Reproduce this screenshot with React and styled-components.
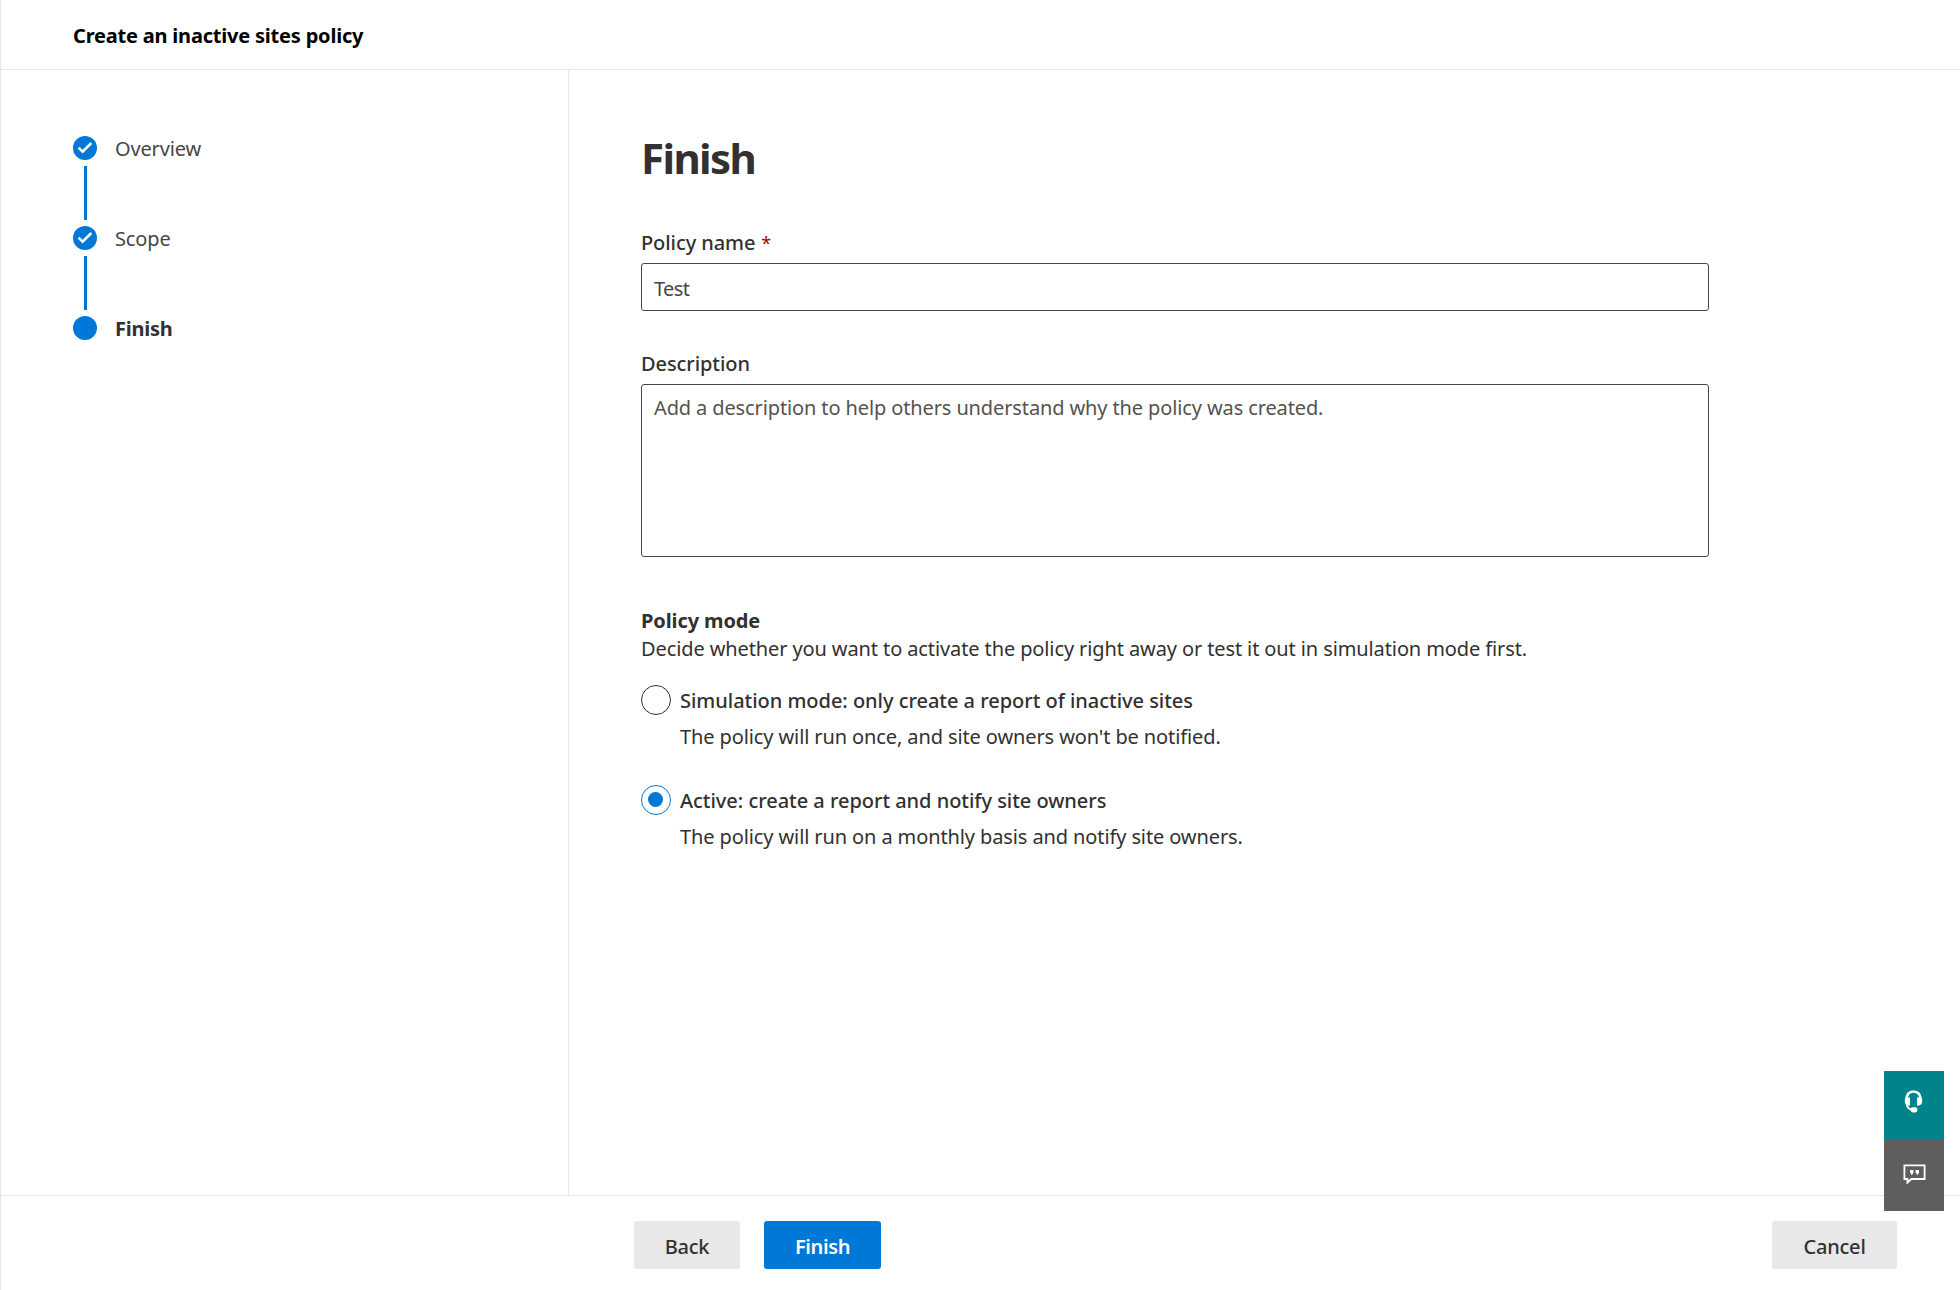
import React, { useState } from 'react';
import styled, { createGlobalStyle } from 'styled-components';

const GlobalStyle = createGlobalStyle`
  * { box-sizing: border-box; }
  body {
    margin: 0;
    background: #fff;
    color: #323130;
    font: 400 20px/28px "Noto Sans", "Open Sans", sans-serif;
    letter-spacing: -0.11px;
  }
`;

const Page = styled.div`
  display: flex;
  flex-direction: column;
  height: 100vh;
  border-left: 1px solid #e6e6e6;
`;

const Header = styled.header`
  display: flex;
  align-items: center;
  height: 70px;
  padding: 2px 72px 0;
  border-bottom: 1px solid #e6e6e6;
  color: #000;
`;

const Title = styled.span`
  font-weight: 700;
  letter-spacing: -0.2px;
`;

const Body = styled.div`
  display: flex;
  flex: 1;
`;

const Sidebar = styled.nav`
  width: 568px;
  padding: 66px 72px;
  border-right: 1px solid #e6e6e6;
`;

const Step = styled.div`
  display: flex;
  align-items: center;
  gap: 18px;
  height: 24px;
  color: ${(p) => (p.$current ? '#323130' : '#484644')};
  font-weight: ${(p) => (p.$current ? 700 : 400)};
  letter-spacing: ${(p) => (p.$current ? '-0.25px' : '-0.15px')};
`;

const StepName = styled.span`
  padding-top: 2px;
`;

const StepDot = styled.span`
  display: flex;
  width: 24px;
  height: 24px;
  border-radius: 50%;
  background: #0078d7;
`;

const StepLine = styled.div`
  width: 3px;
  height: 54px;
  margin: 6px 0 6px 11px;
  background: #0078d7;
`;

const Main = styled.main`
  flex: 1;
  padding: 60px 72px 0;
`;

const Heading = styled.h1`
  margin: 0 0 43px;
  font-size: 42px;
  line-height: 56px;
  font-weight: 700;
  letter-spacing: -1.6px;
`;

const Field = styled.div`
  display: flex;
  flex-direction: column;
  gap: 6px;
  width: 1068px;
  margin-bottom: ${(p) => p.$gap}px;
`;

const Label = styled.label`
  font-weight: 500;
  letter-spacing: -0.08px;
`;

const Required = styled.span`
  margin-left: 6px;
  color: #a80000;
  font-size: 18px;
  font-weight: 400;
`;

const TextInput = styled.input`
  height: 48px;
  padding: 2px 12px 0;
  border: 1px solid #484644;
  border-radius: 3px;
  outline: none;
  color: #484644;
  font: inherit;
  letter-spacing: -0.6px;
`;

const TextArea = styled.textarea`
  display: block;
  height: 173px;
  padding: 9px 12px;
  border: 1px solid #484644;
  border-radius: 3px;
  outline: none;
  resize: none;
  font: inherit;
  letter-spacing: -0.12px;
  &::placeholder { color: #55524f; opacity: 1; }
`;

const GroupTitle = styled.div`
  font-weight: 700;
`;

const GroupText = styled.div`
  margin-bottom: 22px;
`;

const Option = styled.div`
  display: grid;
  grid-template-columns: 30px auto;
  grid-template-rows: 30px auto;
  column-gap: 9px;
  row-gap: 8px;
  margin-bottom: 34px;
`;

const Radio = styled.button`
  display: grid;
  place-items: start;
  width: 30px;
  height: 30px;
  padding: 6px;
  border: 1px solid ${(p) => (p.$on ? '#0078d7' : '#323130')};
  border-radius: 50%;
  background: #fff;
`;

const RadioDot = styled.span`
  width: 15px;
  height: 15px;
  border-radius: 50%;
  background: #0078d7;
`;

const OptionLabel = styled.span`
  padding-top: 2px;
  font-weight: 500;
  letter-spacing: -0.03px;
`;

const OptionText = styled.span`
  grid-column: 2;
`;

const Footer = styled.footer`
  display: flex;
  align-items: flex-start;
  gap: 24px;
  height: 95px;
  padding: 25px 63px 0 633px;
  border-top: 1px solid #e6e6e6;
`;

const Button = styled.button`
  width: ${(p) => p.$width}px;
  height: 48px;
  margin-left: ${(p) => (p.$end ? 'auto' : 0)};
  padding: 3px 0 0;
  border: 0;
  border-radius: 3px;
  background: ${(p) => (p.$primary ? '#0078d7' : '#e8e8e8')};
  color: ${(p) => (p.$primary ? '#fff' : '#323130')};
  font: inherit;
  font-weight: ${(p) => (p.$primary ? 600 : 500)};
  letter-spacing: ${(p) => (p.$primary ? '-0.4px' : '-0.2px')};
`;

const HelpDock = styled.div`
  position: fixed;
  right: 16px;
  top: 1071px;
  width: 60px;
`;

const DockButton = styled.button`
  display: flex;
  justify-content: center;
  width: 60px;
  height: ${(p) => p.$height}px;
  padding: ${(p) => p.$top}px 0 0;
  border: 0;
  background: ${(p) => p.$color};
`;

const CheckIcon = () => (
  <svg width="24" height="24" viewBox="0 0 24 24" fill="none" stroke="#fff" strokeWidth="2.5">
    <path d="M5.600 11.700l4 4L18.300 7" />
  </svg>
);

const HeadsetIcon = () => (
  <svg width="20" height="24" viewBox="0 0 20 24" fill="none" stroke="#fff">
    <path d="M2.600 11C2.300 5.500 5 2.500 9.500 2.500S16.700 5.500 16.400 11" strokeWidth="2.600" />
    <path d="M1 9.500Q.2 13 1.600 15.300L4 16.500H6V8.600H3.500Z" fill="#fff" stroke="none" />
    <path d="M18 9.500Q18.800 13 17.400 15.300L15 16.500H13V8.600H15.500Z" fill="#fff" stroke="none" />
    <path d="M3 15.500C3.200 18.500 5 20.400 8.500 20.600" strokeWidth="2" />
    <rect x="6.500" y="18.200" width="7" height="5.200" rx="2.400" fill="#fff" stroke="none" />
  </svg>
);

const FeedbackIcon = () => (
  <svg width="23" height="20" viewBox="0 0 23 20" fill="none" stroke="#fff" strokeWidth="1.800">
    <path d="M1.400 1.400H21.600V15H8.300L4.400 18.600V15H1.400Z" />
    <path d="M7 6h3.400v2.800l-1.300 2H8V9H7ZM12.600 6H16v2.800l-1.300 2h-1.100V9h-1Z" fill="#fff" stroke="none" />
  </svg>
);

const steps = [
  { name: 'Overview', done: true },
  { name: 'Scope', done: true },
  { name: 'Finish', done: false },
];

const modes = [
  {
    id: 'simulation',
    label: 'Simulation mode: only create a report of inactive sites',
    text: "The policy will run once, and site owners won't be notified.",
  },
  {
    id: 'active',
    label: 'Active: create a report and notify site owners',
    text: 'The policy will run on a monthly basis and notify site owners.',
  },
];

export default function App() {
  const [name, setName] = useState('Test');
  const [mode, setMode] = useState('active');

  return (
    <>
      <GlobalStyle />
      <Page>
        <Header>
          <Title>Create an inactive sites policy</Title>
        </Header>
        <Body>
          <Sidebar>
            {steps.map((s, i) => (
              <React.Fragment key={s.name}>
                {i > 0 && <StepLine />}
                <Step $current={!s.done}>
                  <StepDot>{s.done && <CheckIcon />}</StepDot>
                  <StepName>{s.name}</StepName>
                </Step>
              </React.Fragment>
            ))}
          </Sidebar>
          <Main>
            <Heading>Finish</Heading>
            <Field $gap={39}>
              <Label htmlFor="name">
                Policy name<Required>*</Required>
              </Label>
              <TextInput id="name" value={name} onChange={(e) => setName(e.target.value)} />
            </Field>
            <Field $gap={50}>
              <Label htmlFor="description">Description</Label>
              <TextArea
                id="description"
                placeholder="Add a description to help others understand why the policy was created."
              />
            </Field>
            <GroupTitle>Policy mode</GroupTitle>
            <GroupText>
              Decide whether you want to activate the policy right away or test it out in simulation mode first.
            </GroupText>
            {modes.map((m) => (
              <Option key={m.id}>
                <Radio $on={mode === m.id} onClick={() => setMode(m.id)}>
                  {mode === m.id && <RadioDot />}
                </Radio>
                <OptionLabel>{m.label}</OptionLabel>
                <OptionText>{m.text}</OptionText>
              </Option>
            ))}
          </Main>
        </Body>
        <Footer>
          <Button $width={106}>Back</Button>
          <Button $width={117} $primary>Finish</Button>
          <Button $width={125} $end>Cancel</Button>
        </Footer>
      </Page>
      <HelpDock>
        <DockButton $height={68} $top={18} $color="#00838a" aria-label="Help">
          <HeadsetIcon />
        </DockButton>
        <DockButton $height={72} $top={25} $color="#605e5c" aria-label="Feedback">
          <FeedbackIcon />
        </DockButton>
      </HelpDock>
    </>
  );
}
